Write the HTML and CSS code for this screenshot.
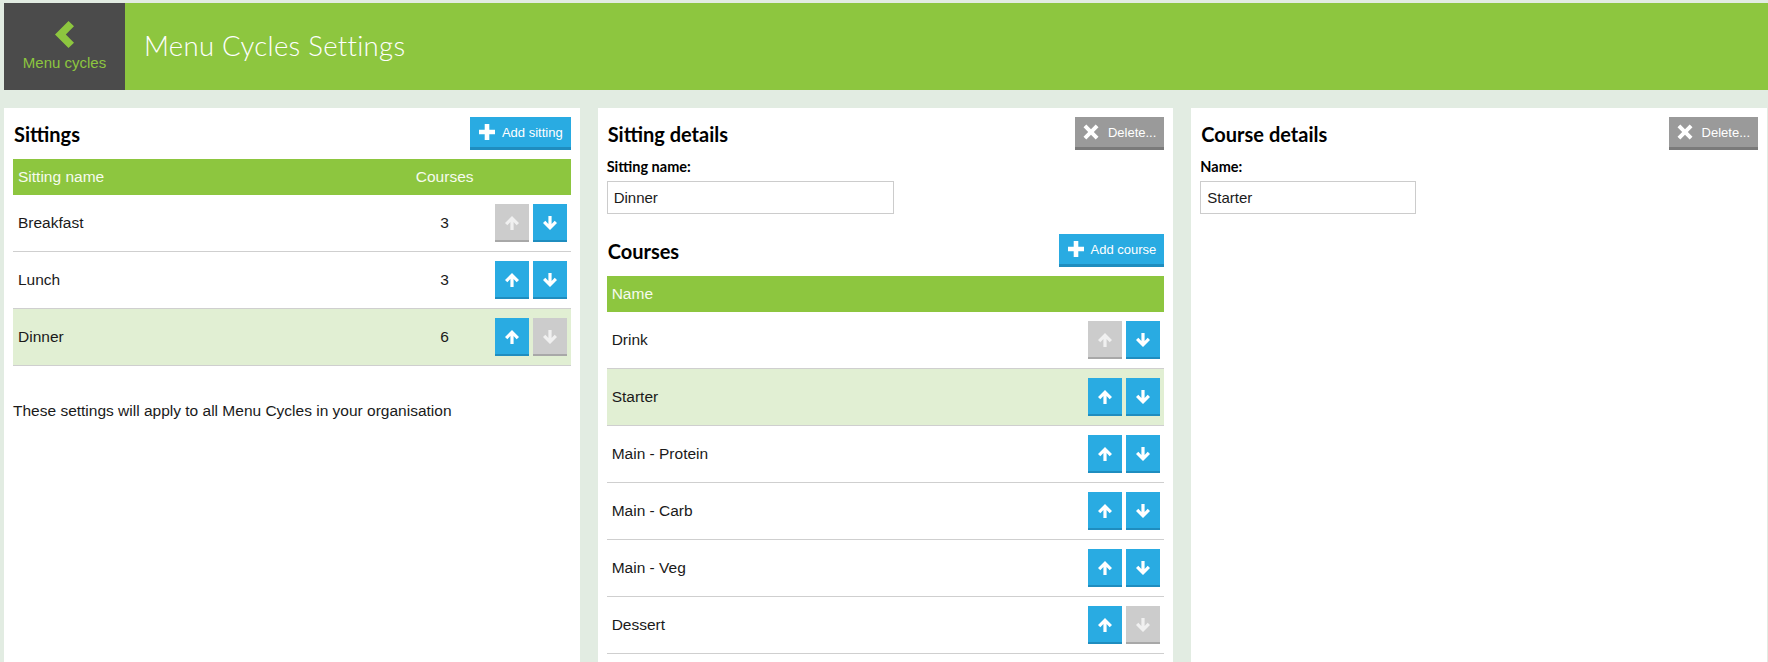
FILE: index.html
```html
<!DOCTYPE html>
<html lang="en">
<head>
<meta charset="utf-8">
<title>Menu Cycles Settings</title>
<link rel="stylesheet" href="styles.css">
</head>
<body>
<div class="page">
  <header class="topbar">
    <a class="back" href="#">
      <svg class="chev" width="19" height="27" viewBox="0 0 19 27"><path d="M13.5 0 L19 5.2 L10.8 13.5 L19 21.8 L13.5 27 L0 13.5 Z" fill="#8dc63f"/></svg>
      <span class="back-label">Menu cycles</span>
    </a>
    <h1 class="title">Menu Cycles Settings</h1>
  </header>

  <main class="panels">
    <section class="panel">
      <div class="panel-head">
        <h2>Sittings</h2>
        <button class="btn btn-blue"><svg class="ico" width="16" height="16" viewBox="0 0 16 16"><path d="M5.7 0H10.3V5.7H16V10.3H10.3V16H5.7V10.3H0V5.7H5.7Z" fill="#fff"/></svg><span>Add sitting</span></button>
      </div>
      <div class="tbl">
        <div class="tr th three"><span>Sitting name</span><span class="num">Courses</span><span></span></div>
        <div class="tr three"><span>Breakfast</span><span class="num">3</span>
          <span class="moves"><i class="mv off"><svg width="16" height="16" viewBox="0 0 16 16"><path d="M8 1 L15 8 L12.7 10.2 L9.6 7.1 V15 H6.4 V7.1 L3.3 10.2 L1 8 Z"/></svg></i><i class="mv"><svg width="16" height="16" viewBox="0 0 16 16"><path d="M8 15 L15 8 L12.7 5.8 L9.6 8.9 V1 H6.4 V8.9 L3.3 5.8 L1 8 Z"/></svg></i></span></div>
        <div class="tr three"><span>Lunch</span><span class="num">3</span>
          <span class="moves"><i class="mv"><svg width="16" height="16" viewBox="0 0 16 16"><path d="M8 1 L15 8 L12.7 10.2 L9.6 7.1 V15 H6.4 V7.1 L3.3 10.2 L1 8 Z"/></svg></i><i class="mv"><svg width="16" height="16" viewBox="0 0 16 16"><path d="M8 15 L15 8 L12.7 5.8 L9.6 8.9 V1 H6.4 V8.9 L3.3 5.8 L1 8 Z"/></svg></i></span></div>
        <div class="tr three sel"><span>Dinner</span><span class="num">6</span>
          <span class="moves"><i class="mv"><svg width="16" height="16" viewBox="0 0 16 16"><path d="M8 1 L15 8 L12.7 10.2 L9.6 7.1 V15 H6.4 V7.1 L3.3 10.2 L1 8 Z"/></svg></i><i class="mv off"><svg width="16" height="16" viewBox="0 0 16 16"><path d="M8 15 L15 8 L12.7 5.8 L9.6 8.9 V1 H6.4 V8.9 L3.3 5.8 L1 8 Z"/></svg></i></span></div>
      </div>
      <p class="note">These settings will apply to all Menu Cycles in your organisation</p>
    </section>

    <section class="panel">
      <div class="panel-head">
        <h2>Sitting details</h2>
        <button class="btn btn-grey"><svg class="ico" width="16" height="16" viewBox="0 0 16 16"><path d="M0.5 3.3 L3.3 0.5 L8 5.2 L12.7 0.5 L15.5 3.3 L10.8 8 L15.5 12.7 L12.7 15.5 L8 10.8 L3.3 15.5 L0.5 12.7 L5.2 8 Z" fill="#fff"/></svg><span>Delete...</span></button>
      </div>
      <label class="lbl">Sitting name:</label>
      <div class="input wide">Dinner</div>
      <div class="panel-head sub">
        <h2>Courses</h2>
        <button class="btn btn-blue"><svg class="ico" width="16" height="16" viewBox="0 0 16 16"><path d="M5.7 0H10.3V5.7H16V10.3H10.3V16H5.7V10.3H0V5.7H5.7Z" fill="#fff"/></svg><span>Add course</span></button>
      </div>
      <div class="tbl">
        <div class="tr th two"><span>Name</span><span></span></div>
        <div class="tr two"><span>Drink</span>
          <span class="moves"><i class="mv off"><svg width="16" height="16" viewBox="0 0 16 16"><path d="M8 1 L15 8 L12.7 10.2 L9.6 7.1 V15 H6.4 V7.1 L3.3 10.2 L1 8 Z"/></svg></i><i class="mv"><svg width="16" height="16" viewBox="0 0 16 16"><path d="M8 15 L15 8 L12.7 5.8 L9.6 8.9 V1 H6.4 V8.9 L3.3 5.8 L1 8 Z"/></svg></i></span></div>
        <div class="tr two sel"><span>Starter</span>
          <span class="moves"><i class="mv"><svg width="16" height="16" viewBox="0 0 16 16"><path d="M8 1 L15 8 L12.7 10.2 L9.6 7.1 V15 H6.4 V7.1 L3.3 10.2 L1 8 Z"/></svg></i><i class="mv"><svg width="16" height="16" viewBox="0 0 16 16"><path d="M8 15 L15 8 L12.7 5.8 L9.6 8.9 V1 H6.4 V8.9 L3.3 5.8 L1 8 Z"/></svg></i></span></div>
        <div class="tr two"><span>Main - Protein</span>
          <span class="moves"><i class="mv"><svg width="16" height="16" viewBox="0 0 16 16"><path d="M8 1 L15 8 L12.7 10.2 L9.6 7.1 V15 H6.4 V7.1 L3.3 10.2 L1 8 Z"/></svg></i><i class="mv"><svg width="16" height="16" viewBox="0 0 16 16"><path d="M8 15 L15 8 L12.7 5.8 L9.6 8.9 V1 H6.4 V8.9 L3.3 5.8 L1 8 Z"/></svg></i></span></div>
        <div class="tr two"><span>Main - Carb</span>
          <span class="moves"><i class="mv"><svg width="16" height="16" viewBox="0 0 16 16"><path d="M8 1 L15 8 L12.7 10.2 L9.6 7.1 V15 H6.4 V7.1 L3.3 10.2 L1 8 Z"/></svg></i><i class="mv"><svg width="16" height="16" viewBox="0 0 16 16"><path d="M8 15 L15 8 L12.7 5.8 L9.6 8.9 V1 H6.4 V8.9 L3.3 5.8 L1 8 Z"/></svg></i></span></div>
        <div class="tr two"><span>Main - Veg</span>
          <span class="moves"><i class="mv"><svg width="16" height="16" viewBox="0 0 16 16"><path d="M8 1 L15 8 L12.7 10.2 L9.6 7.1 V15 H6.4 V7.1 L3.3 10.2 L1 8 Z"/></svg></i><i class="mv"><svg width="16" height="16" viewBox="0 0 16 16"><path d="M8 15 L15 8 L12.7 5.8 L9.6 8.9 V1 H6.4 V8.9 L3.3 5.8 L1 8 Z"/></svg></i></span></div>
        <div class="tr two"><span>Dessert</span>
          <span class="moves"><i class="mv"><svg width="16" height="16" viewBox="0 0 16 16"><path d="M8 1 L15 8 L12.7 10.2 L9.6 7.1 V15 H6.4 V7.1 L3.3 10.2 L1 8 Z"/></svg></i><i class="mv off"><svg width="16" height="16" viewBox="0 0 16 16"><path d="M8 15 L15 8 L12.7 5.8 L9.6 8.9 V1 H6.4 V8.9 L3.3 5.8 L1 8 Z"/></svg></i></span></div>
      </div>
    </section>

    <section class="panel">
      <div class="panel-head">
        <h2>Course details</h2>
        <button class="btn btn-grey"><svg class="ico" width="16" height="16" viewBox="0 0 16 16"><path d="M0.5 3.3 L3.3 0.5 L8 5.2 L12.7 0.5 L15.5 3.3 L10.8 8 L15.5 12.7 L12.7 15.5 L8 10.8 L3.3 15.5 L0.5 12.7 L5.2 8 Z" fill="#fff"/></svg><span>Delete...</span></button>
      </div>
      <label class="lbl">Name:</label>
      <div class="input narrow">Starter</div>
    </section>
  </main>
</div>
</body>
</html>
```

FILE: styles.css
```css
html, body {
  margin: 0;
  padding: 0;
  height: 662px;
  overflow: hidden;
}
body {
  background: #e2ece2;
  font-family: "Liberation Sans", Arial, sans-serif;
  font-size: 15.5px;
  color: #1a1a1a;
}
.page {
  padding: 3px 0 0 4px;
}
.topbar {
  display: flex;
  align-items: center;
  height: 87px;
  background: #8dc63f;
}
.back {
  width: 121px;
  height: 87px;
  background: #4b4b4b;
  display: flex;
  flex-direction: column;
  align-items: center;
  box-sizing: border-box;
  padding-top: 18px;
  text-decoration: none;
}
.chev { display: block; }
.back-label {
  margin-top: 6px;
  color: #8dc63f;
  font-size: 15px;
  line-height: 18px;
}
.title {
  margin: 0 0 2px 19px;
  font-family: Lato, "Open Sans", sans-serif;
  font-weight: 300;
  font-size: 27.5px;
  color: #fff;
  letter-spacing: 0.3px;
}
.panels {
  display: grid;
  grid-template-columns: 1fr 1fr 1fr;
  gap: 18px;
  margin-top: 18px;
  padding-right: 1px;
}
.panel {
  background: #fff;
  min-height: 600px;
  padding: 9px 9px 0 9px;
}
.panel-head {
  display: flex;
  justify-content: space-between;
  align-items: center;
  height: 33px;
  margin-bottom: 9px;
}
.panel-head.sub { margin-top: 20px; }
h2 {
  margin: 0 0 0 1px;
  font-family: Lato, "Liberation Sans", sans-serif;
  font-weight: 700;
  font-size: 20px;
  color: #000;
}
.btn {
  display: inline-flex;
  align-items: center;
  gap: 7px;
  height: 33px;
  box-sizing: border-box;
  padding: 0 8px 0 9px;
  border: 0;
  border-bottom: 3px solid;
  color: #fff;
  font-family: "Liberation Sans", Arial, sans-serif;
  font-size: 13px;
}
.btn .ico { display: block; }
.btn-blue { background: #29abe2; border-bottom-color: #1f8dbf; }
.btn-grey { background: #9a9a9a; border-bottom-color: #7a7a7a; padding-left: 8px; gap: 9px; }
.tbl { width: 100%; }
.tr {
  display: grid;
  align-items: center;
  height: 57px;
  box-sizing: border-box;
  border-bottom: 1px solid #cfcfcf;
  padding-left: 5px;
}
.tr.three { grid-template-columns: 1fr 80px 86px; }
.tr.two { grid-template-columns: 1fr 86px; }
.tr.th {
  height: 36px;
  background: #8dc63f;
  color: #f6fbee;
  border-bottom: 0;
}
.tr.sel { background: #e1efd3; }
.num { text-align: center; }
.moves {
  display: flex;
  justify-content: flex-end;
  gap: 4px;
  padding-right: 4px;
}
.mv {
  display: flex;
  align-items: center;
  justify-content: center;
  width: 34px;
  height: 38px;
  box-sizing: border-box;
  padding-top: 1px;
  background: #29abe2;
  border-bottom: 2px solid #1f8dbf;
  fill: #fff;
}
.mv.off {
  background: #cccccc;
  border-bottom-color: #a8a8a8;
  fill: #f0f0f0;
}
.mv svg { display: block; }
.note {
  margin: 36px 0 0 0;
  line-height: 18px;
}
.lbl {
  display: block;
  margin-top: -1px;
  font-family: Lato, "Liberation Sans", sans-serif;
  font-weight: 700;
  font-size: 14.5px;
  line-height: 18px;
  color: #000;
}
.input {
  margin-top: 5px;
  height: 33px;
  box-sizing: border-box;
  border: 1px solid #cccccc;
  padding: 0 6px;
  display: flex;
  align-items: center;
  font-size: 15px;
}
.input.wide { width: 287px; }
.input.narrow { width: 216px; }
```
